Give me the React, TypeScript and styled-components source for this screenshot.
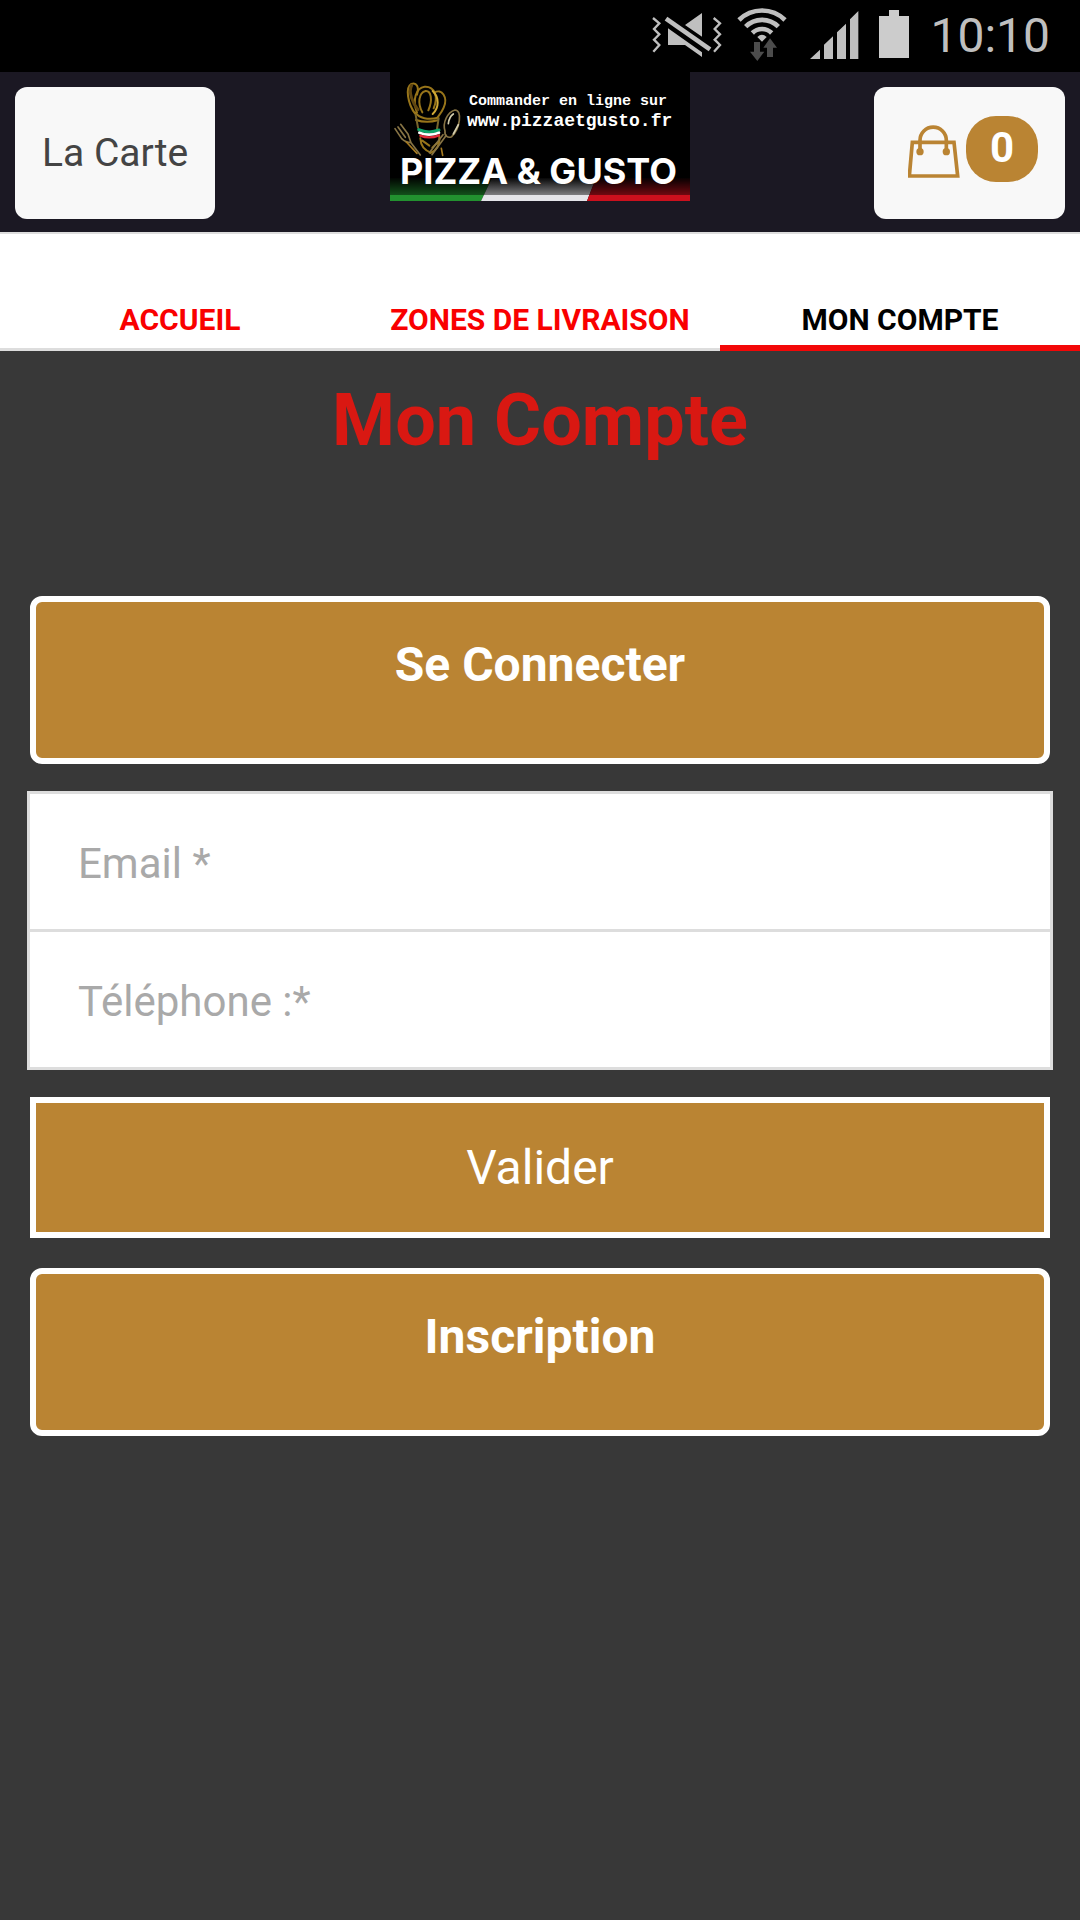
import React from "react";
import styled, { createGlobalStyle } from "styled-components";

const gold = "#ba8433";
const silver = "#bfbfbf";

const GlobalStyle = createGlobalStyle`
  *, *::before, *::after { box-sizing: border-box; }
  html { background: #383838; }
  body { margin: 0; font-family: Roboto, "Liberation Sans", sans-serif; }
  button, input { font-family: inherit; }
`;

const Page = styled.div`
  min-height: 100vh;
  background: #383838;
`;

const StatusBar = styled.div`
  display: flex;
  justify-content: flex-end;
  align-items: center;
  gap: 16px;
  height: 72px;
  padding-right: 30px;
  background: #000;
  color: ${silver};
  font-size: 48px;
  line-height: 72px;

  svg { display: block; flex: none; }
`;

const Header = styled.header`
  display: grid;
  grid-template-columns: 1fr auto 1fr;
  align-items: start;
  padding: 0 15px 13px;
  background: #1b1823;
  border-bottom: 2px solid #ddd;
`;

const HeaderButton = styled.button<{ $side: "start" | "end" }>`
  display: flex;
  align-items: center;
  justify-content: center;
  justify-self: ${(p) => p.$side};
  gap: 6px;
  height: 132px;
  margin-top: 15px;
  padding: 0 27px;
  border: 0;
  border-radius: 12px;
  background: #f8f8f8;
  color: #444;
  font-size: 39px;
  line-height: 46px;
`;

const CartButton = styled(HeaderButton)`
  padding: 0 27px 8px 34px;
`;

const Badge = styled.span`
  min-width: 72px;
  padding: 7px 12px 10px;
  border-radius: 30px;
  background: ${gold};
  color: #fff;
  font-size: 42px;
  font-weight: 700;
  line-height: 49px;
  text-align: center;
`;

const Tabs = styled.nav`
  display: grid;
  grid-template-columns: repeat(3, 1fr);
  background: #fff;
`;

const Tab = styled.a<{ $active?: boolean }>`
  padding: 68px 0 ${(p) => (p.$active ? 8 : 11)}px;
  border-bottom: ${(p) => (p.$active ? "6px solid #f30707" : "3px solid #ddd")};
  color: ${(p) => (p.$active ? "#000" : "#f90000")};
  font-size: 30px;
  font-weight: 700;
  line-height: 35px;
  text-align: center;
  text-decoration: none;
  text-transform: uppercase;
  white-space: nowrap;
`;

const Main = styled.main`
  padding: 28px 30px;
`;

const Title = styled.h1`
  margin: 0 0 133px;
  color: #d91812;
  font-size: 72px;
  font-weight: 700;
  line-height: 84px;
  text-align: center;
`;

const ActionButton = styled.button`
  display: block;
  width: 100%;
  border: 6px solid #fff;
  background: ${gold};
  color: #fff;
  font-size: 48px;
  line-height: 56px;
  text-align: center;
`;

const SectionButton = styled(ActionButton)`
  padding: 35px 24px 65px;
  border-radius: 12px;
  font-weight: 700;
`;

const SubmitButton = styled(ActionButton)`
  padding: 37px 24px 36px;
  font-weight: 400;
`;

const LoginForm = styled.form`
  margin: 27px 0 30px;
`;

const Fields = styled.div`
  margin: 0 -3px 27px;
  border: 3px solid #ddd;
  background: #fff;
`;

const Field = styled.label`
  display: block;

  & + & { border-top: 3px solid #ddd; }
`;

const TextInput = styled.input`
  display: block;
  width: 100%;
  height: 135px;
  padding: 45px 48px 41px;
  border: 0;
  outline: 0;
  background: transparent;
  color: #444;
  font-size: 42px;
  line-height: 49px;

  &::placeholder { color: #a9a9a9; opacity: 1; }
`;

const LogoLink = styled.a`
  display: block;

  svg { display: block; }
`;

const MuteIcon = () => (
  <svg width="69" height="72" viewBox="66 0 207 216" fill={silver} overflow="visible">
    <path
      d="M69 54 88 70 72 87 88 103 72 119 88 135 70 155M251 54 270 70 254 87 270 103 254 119 270 135 252 155"
      fill="none" stroke={silver} strokeWidth="7"
    />
    <path d="M108 56 240 148" stroke={silver} strokeWidth="14" />
    <path d="M216 39V110L165 75ZM114 85 216 157V171L165 135H114Z" />
  </svg>
);

const WifiIcon = () => (
  <svg width="53" height="72" viewBox="321 0 159 216">
    <g fill="none" stroke={silver} strokeWidth="14">
      <path d="M327 60A98 98 0 0 1 465 60" />
      <path d="M347 80A69 69 0 0 1 445 80" />
      <path d="M367 99A41 41 0 0 1 425 99" />
    </g>
    <path d="M382 111Q396 98 410 111L396 125Z" fill={silver} />
    <path d="M372 126H390V155H403L382 183 360 155H372ZM411 171V143H400L420 115 441 143H429V171Z" fill="#4c4c4c" />
  </svg>
);

const SignalIcon = () => (
  <svg width="55" height="72" viewBox="528 0 165 216" fill={silver}>
    <path d="M540 177 570 149V177ZM582 177V134L609 109V177ZM621 177V97L648 71V177ZM660 177V58L685 33V177Z" />
  </svg>
);

const BatteryIcon = () => (
  <svg width="37" height="72" viewBox="741 0 111 216" fill="#ccc">
    <path d="M777 30H807V48H837V174H747V48H777Z" />
  </svg>
);

const BagIcon = () => (
  <svg width="52" height="57" viewBox="0 -12 156 171" fill="none" stroke={gold} strokeWidth="11">
    <path d="M13 52H138L149 153H4Z" />
    <path d="M36 76V46A39 39 0 0 1 115 46V76" />
    <circle cx="36" cy="80" r="11" fill={gold} stroke="none" />
    <circle cx="115" cy="80" r="11" fill={gold} stroke="none" />
  </svg>
);

const Logo = () => (
  <svg width="300" height="129" viewBox="0 0 300 129" role="img" aria-label="Pizza & Gusto">
    <defs>
      <linearGradient id="fade" x1="0" y1="0" x2="0" y2="1">
        <stop offset="0" stopColor="#000" />
        <stop offset="1" stopColor="#000" stopOpacity="0.45" />
      </linearGradient>
    </defs>
    <rect width="300" height="129" fill="#000" />
    <path d="M0 106H102L91 129H0Z" fill="#22912f" />
    <path d="M102 106H206L197 129H91Z" fill="#e4e4e9" />
    <path d="M206 106H300V129H197Z" fill="#cb101d" />
    <rect y="105" width="300" height="18" fill="url(#fade)" />
    <g transform="translate(-10 -12) scale(0.3333)" fill="none" strokeLinecap="round" strokeLinejoin="round">
      <g stroke="#98751a" strokeWidth="6">
        <path d="M106 162C82 130 76 82 94 72C110 66 118 82 111 104" />
        <path d="M111 158C96 120 108 83 134 80C163 78 176 109 161 145" />
        <path d="M127 157C112 130 116 98 137 93C153 92 159 119 145 151" />
        <path d="M163 98C185 84 205 112 191 143C185 158 177 166 171 174" />
        <path d="M158 93C178 112 178 143 158 162" stroke="#d0a936" />
        <path d="M95 76C84 96 98 130 114 149" stroke="#604610" strokeWidth="9" />
        <path d="M106 158C117 174 145 181 174 173M108 180C129 187 151 187 173 181" />
        <path d="M107 165L114 203M176 175L171 207" stroke="#77652c" />
        <path d="M121 235C122 258 135 272 153 278M178 230C180 256 168 272 151 279M127 242L148 257M178 242L157 263" />
      </g>
      <g stroke="#877445" strokeWidth="5">
        <path d="M45 206L65 236C73 244 84 248 93 248L121 285M62 193L84 222L93 248M54 201L76 232" />
        <path d="M195 213C187 188 202 157 225 150C248 150 240 207 215 230C204 235 193 229 195 213Z" />
        <path d="M199 226L156 284M189 224L148 278" />
        <path d="M205 191Q207 171 220 162M220 222L235 194" stroke="#d4ceae" />
        <path d="M79 246L111 280M184 265L188 286" stroke="#a77b21" />
      </g>
      <path d="M116 209Q146 222 177 210" stroke="#11a268" strokeWidth="9" />
      <path d="M118 218Q147 230 177 218" stroke="#fff" strokeWidth="8" />
      <path d="M121 227Q148 238 177 226" stroke="#e22b3a" strokeWidth="7" />
    </g>
    <g fill="#fff" fontWeight="700">
      <text x="79" y="33" fontFamily="'Liberation Mono', monospace" fontSize="15">Commander en ligne sur</text>
      <text x="77" y="54" fontFamily="'Liberation Mono', monospace" fontSize="18">www.pizzaetgusto.fr</text>
      <text x="10" y="112" fontFamily="Inter, sans-serif" fontSize="36">PIZZA &amp; GUSTO</text>
    </g>
  </svg>
);

export default function App() {
  return (
    <Page>
      <GlobalStyle />
      <StatusBar>
        <MuteIcon />
        <WifiIcon />
        <SignalIcon />
        <BatteryIcon />
        <time>10:10</time>
      </StatusBar>
      <Header>
        <HeaderButton type="button" $side="start">La Carte</HeaderButton>
        <LogoLink href="#accueil"><Logo /></LogoLink>
        <CartButton type="button" $side="end">
          <BagIcon />
          <Badge>0</Badge>
        </CartButton>
      </Header>
      <Tabs>
        <Tab href="#accueil">Accueil</Tab>
        <Tab href="#zones">Zones de livraison</Tab>
        <Tab href="#compte" $active aria-current="page">Mon compte</Tab>
      </Tabs>
      <Main>
        <Title>Mon Compte</Title>
        <SectionButton type="button">Se Connecter</SectionButton>
        <LoginForm onSubmit={(e) => e.preventDefault()}>
          <Fields>
            <Field>
              <TextInput type="email" name="email" aria-label="Email" placeholder="Email *" />
            </Field>
            <Field>
              <TextInput type="tel" name="telephone" aria-label="Téléphone" placeholder="Téléphone :*" />
            </Field>
          </Fields>
          <SubmitButton type="submit">Valider</SubmitButton>
        </LoginForm>
        <SectionButton type="button">Inscription</SectionButton>
      </Main>
    </Page>
  );
}
